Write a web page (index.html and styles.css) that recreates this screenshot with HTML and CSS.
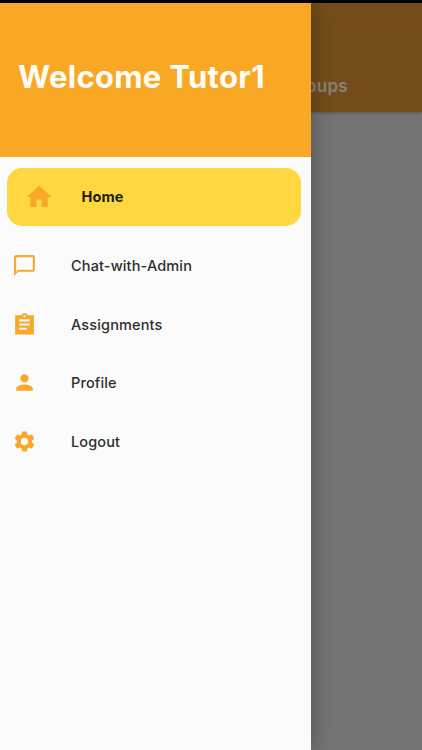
FILE: index.html
```
<!DOCTYPE html>
<html lang="en">
<head>
<meta charset="utf-8">
<title>Tutor</title>
<link rel="stylesheet" href="styles.css">
</head>
<body>
<div class="screen">
  <div class="page">
    <header class="appbar"><span class="appbar-title">Groups</span></header>
  </div>
  <aside class="drawer">
    <header class="drawer-header"><h1>Welcome Tutor1</h1></header>
    <nav class="menu">
      <a class="item item-active">
        <svg class="icon" viewBox="0 0 24 24"><path d="M10 20v-6h4v6h5v-8h3L12 3 2 12h3v8z"/></svg>
        <span class="label">Home</span>
      </a>
      <a class="item">
        <svg class="icon" viewBox="0 0 24 24"><path d="M20 2H4c-1.1 0-2 .9-2 2v18l4-4h14c1.1 0 2-.9 2-2V4c0-1.100-.9-2-2-2zm0 14H6l-2 2V4h16v12z"/></svg>
        <span class="label">Chat-with-Admin</span>
      </a>
      <a class="item">
        <svg class="icon" viewBox="0 0 24 24"><path d="M21 3h-6.180C14.400 1.840 13.300 1 12 1c-1.300 0-2.400.84-2.820 2H3v18.500h18V3zm-9 0c.55 0 1 .45 1 1s-.45 1-1 1-1-.45-1-1 .45-1 1-1zm2 14H7v-2h7v2zm3-4H7v-2h10v2zm0-4H7V7h10v2z"/></svg>
        <span class="label">Assignments</span>
      </a>
      <a class="item">
        <svg class="icon" viewBox="0 0 24 24"><path d="M12 12c2.210 0 4-1.790 4-4s-1.790-4-4-4-4 1.790-4 4 1.790 4 4 4zm0 2c-2.670 0-8 1.340-8 4v2h16v-2c0-2.660-5.330-4-8-4z"/></svg>
        <span class="label">Profile</span>
      </a>
      <a class="item">
        <svg class="icon" viewBox="0 0 24 24"><path d="M19.140 12.940c.04-.3.060-.61.060-.94 0-.32-.02-.64-.07-.94l2.030-1.580c.18-.14.230-.41.120-.61l-1.920-3.320c-.12-.22-.37-.29-.59-.22l-2.390.96c-.5-.38-1.030-.7-1.620-.94l-.36-2.540c-.04-.24-.24-.41-.48-.41h-3.840c-.24 0-.43.17-.47.41l-.36 2.540c-.59.24-1.130.57-1.620.94l-2.390-.96c-.22-.08-.47 0-.59.22L2.740 8.870c-.12.210-.08.470.12.610l2.030 1.580c-.05.3-.09.630-.09.940s.02.640.07.940l-2.030 1.580c-.18.140-.23.410-.12.610l1.920 3.320c.12.220.37.290.59.220l2.390-.96c.5.380 1.030.7 1.620.94l.36 2.540c.05.240.24.410.48.410h3.840c.24 0 .44-.17.470-.41l.36-2.540c.59-.24 1.130-.56 1.620-.94l2.390.96c.22.080.47 0 .59-.22l1.920-3.320c.12-.22.070-.47-.12-.61l-2.010-1.580zM12 15.600c-1.980 0-3.600-1.620-3.600-3.600s1.620-3.600 3.600-3.600 3.600 1.620 3.600 3.600-1.620 3.600-3.600 3.600z"/></svg>
        <span class="label">Logout</span>
      </a>
    </nav>
  </aside>
</div>
</body>
</html>
```
FILE: styles.css
```
* { box-sizing: border-box; }
body { margin: 0; background: #000; font-family: Inter, "Liberation Sans", sans-serif; }
.screen {
  position: relative;
  height: 750px;
  padding-top: 3px;
  overflow: hidden;
  background: #000;
}
.page { height: 747px; background: #737373; }
.appbar {
  display: flex;
  justify-content: flex-end;
  height: 109px;
  padding: 73px 74px 0 0;
  background: #734d1a;
  box-shadow: 0 1px 3px rgba(0, 0, 0, .25);
}
.appbar-title {
  font-size: 17px;
  line-height: 20px;
  font-weight: 600;
  letter-spacing: .3px;
  color: #8a8279;
}
.drawer {
  position: absolute;
  top: 3px;
  left: 0;
  width: 311px;
  height: 747px;
  background: #fbfbfb;
  box-shadow: 0 0 20px rgba(0, 0, 0, .3);
  clip-path: inset(0 -40px 0 0);
}
.drawer-header {
  height: 154px;
  padding: 54px 0 0 18px;
  background: #f9a826;
}
h1 {
  margin: 0;
  font-size: 31px;
  line-height: 40px;
  font-weight: 700;
  letter-spacing: .3px;
  white-space: nowrap;
  color: #fffdf7;
}
.menu { padding-top: 11px; }
.item {
  display: flex;
  align-items: center;
  height: 58.6px;
  padding-left: 12px;
  color: #2e2e2e;
}
.icon {
  width: 25px;
  height: 25px;
  margin-right: 34px;
  fill: #f9a82a;
}
.label {
  font-size: 14.5px;
  font-weight: 500;
  letter-spacing: .14px;
}
.item-active {
  height: 58px;
  margin: 0 10px 10.4px 7px;
  padding-left: 16.5px;
  border-radius: 15px;
  background: #ffd740;
}
.item-active .icon {
  width: 30px;
  height: 30px;
  margin-right: 28px;
}
.item-active .label {
  padding-bottom: 2px;
  font-weight: 700;
  letter-spacing: .1px;
  color: #211c0a;
}
```
